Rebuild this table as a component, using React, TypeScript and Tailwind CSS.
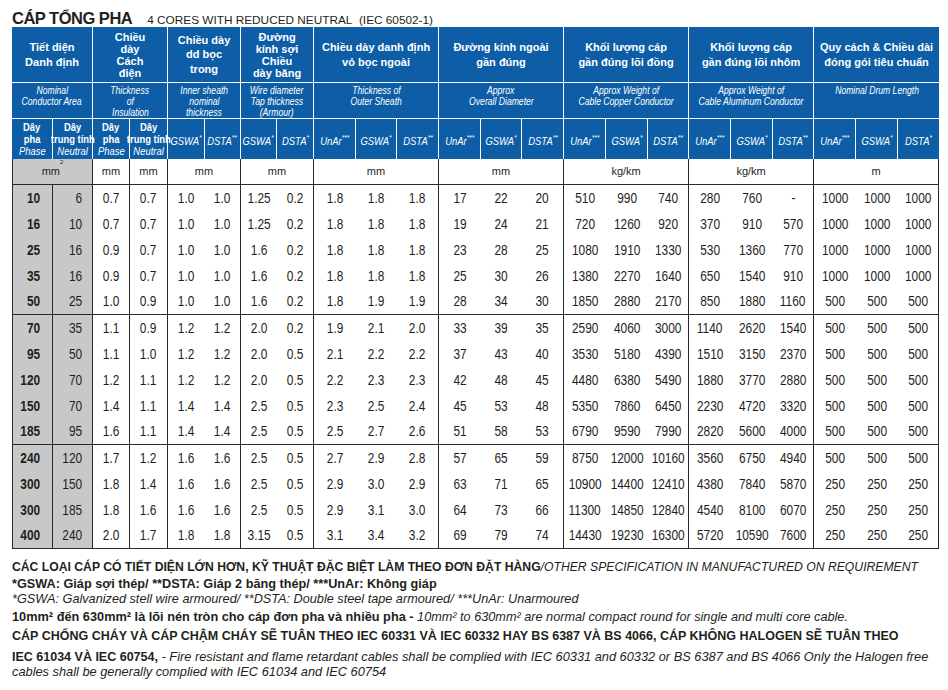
import React from "react";

const colW = [
  "w-[41px]", "w-[40px]", "w-[37px]", "w-[38px]", "w-[37px]", "w-[36px]", "w-[36px]", "w-[37px]",
  "w-[42px]", "w-[41px]", "w-[42px]", "w-[42px]", "w-[41px]", "w-[42px]", "w-[42px]", "w-[42px]",
  "w-[41px]", "w-[42px]", "w-[42px]", "w-[41px]", "w-[42px]", "w-[42px]", "w-[41px]",
];

const groups = [
  { span: 2, vi: ["Tiết diện", "Danh định"], en: ["Nominal", "Conductor Area"], tight: false },
  { span: 2, vi: ["Chiều", "dày", "Cách", "điện"], en: ["Thickness", "of", "Insulation"], tight: true },
  { span: 2, vi: ["Chiều dày", "dd bọc", "trong"], en: ["Inner sheath", "nominal", "thickness"], tight: false },
  { span: 2, vi: ["Đường", "kính sợi", "Chiều", "dày băng"], en: ["Wire diameter", "Tap thickness", "(Armour)"], tight: true },
  { span: 3, vi: ["Chiều dày danh định", "vỏ bọc ngoài"], en: ["Thickness of", "Outer Sheath"], tight: false },
  { span: 3, vi: ["Đường kính ngoài", "gần đúng"], en: ["Approx", "Overall Diameter"], tight: false },
  { span: 3, vi: ["Khối lượng cáp", "gần đúng lõi đồng"], en: ["Approx Weight of", "Cable Copper Conductor"], tight: false },
  { span: 3, vi: ["Khối lượng cáp", "gần đúng lõi nhôm"], en: ["Approx Weight of", "Cable Aluminum Conductor"], tight: false },
  { span: 3, vi: ["Quy cách & Chiều dài", "đóng gói tiêu chuẩn"], en: ["Nominal Drum Length"], tight: false },
];

const subs: [string, string][] = [
  ["GSWA", "*"], ["DSTA", "**"], ["GSWA", "*"], ["DSTA", "*"],
  ["UnAr", "***"], ["GSWA", "*"], ["DSTA", "**"],
  ["UnAr", "***"], ["GSWA", "*"], ["DSTA", "**"],
  ["UnAr", "***"], ["GSWA", "*"], ["DSTA", "**"],
  ["UnAr", "***"], ["GSWA", "*"], ["DSTA", "**"],
  ["UnAr", "***"], ["GSWA", "*"], ["DSTA", "*"],
];

const units: [string, number][] = [
  ["mm", 1], ["mm", 1], ["mm", 2], ["mm", 2], ["mm", 3], ["mm", 3], ["kg/km", 3], ["kg/km", 3], ["m", 3],
];

const data = [
  [
    ["10", "6", "0.7", "0.7", "1.0", "1.0", "1.25", "0.2", "1.8", "1.8", "1.8", "17", "22", "20", "510", "990", "740", "280", "760", "-", "1000", "1000", "1000"],
    ["16", "10", "0.7", "0.7", "1.0", "1.0", "1.25", "0.2", "1.8", "1.8", "1.8", "19", "24", "21", "720", "1260", "920", "370", "910", "570", "1000", "1000", "1000"],
    ["25", "16", "0.9", "0.7", "1.0", "1.0", "1.6", "0.2", "1.8", "1.8", "1.8", "23", "28", "25", "1080", "1910", "1330", "530", "1360", "770", "1000", "1000", "1000"],
    ["35", "16", "0.9", "0.7", "1.0", "1.0", "1.6", "0.2", "1.8", "1.8", "1.8", "25", "30", "26", "1380", "2270", "1640", "650", "1540", "910", "1000", "1000", "1000"],
    ["50", "25", "1.0", "0.9", "1.0", "1.0", "1.6", "0.2", "1.8", "1.9", "1.9", "28", "34", "30", "1850", "2880", "2170", "850", "1880", "1160", "500", "500", "500"],
  ],
  [
    ["70", "35", "1.1", "0.9", "1.2", "1.2", "2.0", "0.2", "1.9", "2.1", "2.0", "33", "39", "35", "2590", "4060", "3000", "1140", "2620", "1540", "500", "500", "500"],
    ["95", "50", "1.1", "1.0", "1.2", "1.2", "2.0", "0.5", "2.1", "2.2", "2.2", "37", "43", "40", "3530", "5180", "4390", "1510", "3150", "2370", "500", "500", "500"],
    ["120", "70", "1.2", "1.1", "1.2", "1.2", "2.0", "0.5", "2.2", "2.3", "2.3", "42", "48", "45", "4480", "6380", "5490", "1880", "3770", "2880", "500", "500", "500"],
    ["150", "70", "1.4", "1.1", "1.4", "1.4", "2.5", "0.5", "2.3", "2.5", "2.4", "45", "53", "48", "5350", "7860", "6450", "2230", "4720", "3320", "500", "500", "500"],
    ["185", "95", "1.6", "1.1", "1.4", "1.4", "2.5", "0.5", "2.5", "2.7", "2.6", "51", "58", "53", "6790", "9590", "7990", "2820", "5600", "4000", "500", "500", "500"],
  ],
  [
    ["240", "120", "1.7", "1.2", "1.6", "1.6", "2.5", "0.5", "2.7", "2.9", "2.8", "57", "65", "59", "8750", "12000", "10160", "3560", "6750", "4940", "500", "500", "500"],
    ["300", "150", "1.8", "1.4", "1.6", "1.6", "2.5", "0.5", "2.9", "3.0", "2.9", "63", "71", "65", "10900", "14400", "12410", "4380", "7840", "5870", "250", "250", "250"],
    ["300", "185", "1.8", "1.6", "1.6", "1.6", "2.5", "0.5", "2.9", "3.1", "3.0", "64", "73", "66", "11300", "14850", "12840", "4540", "8100", "6070", "250", "250", "250"],
    ["400", "240", "2.0", "1.7", "1.8", "1.8", "3.15", "0.5", "3.1", "3.4", "3.2", "69", "79", "74", "14430", "19230", "16300", "5720", "10590", "7600", "250", "250", "250"],
  ],
];

// columns that carry a dark vertical rule on their right side
const ruled = [0, 1, 2, 3, 5, 7, 10, 13, 16, 19, 22];

// Arial Narrow look: regular Liberation Sans squeezed horizontally
function Nar({ children, className = "" }: { children: React.ReactNode; className?: string }) {
  return (
    <div className={`flex justify-center ${className}`}>
      <span className="inline-block whitespace-nowrap scale-x-[0.82]">{children}</span>
    </div>
  );
}

function Head() {
  return (
    <thead className="text-white">
      <tr className="h-[56px]">
        {groups.map((g, i) => (
          <th
            key={i}
            colSpan={g.span}
            className={`bg-[#0d5ea6] border-b border-white align-middle text-[11px] font-bold ${g.tight ? "leading-[12px]" : "leading-[14.5px]"} ${i < groups.length - 1 ? "border-r" : ""}`}
          >
            {g.vi.map((l, j) => (
              <div key={j}>{l}</div>
            ))}
          </th>
        ))}
      </tr>
      <tr className="h-[34px]">
        {groups.map((g, i) => (
          <th
            key={i}
            colSpan={g.span}
            className={`bg-[#0d5ea6] border-b border-white align-top pt-[2px] text-[10.5px] font-normal italic leading-[11px] ${i < groups.length - 1 ? "border-r" : ""}`}
          >
            {g.en.map((l, j) => (
              <Nar key={j}>{l}</Nar>
            ))}
          </th>
        ))}
      </tr>
      <tr className="h-[40px]">
        {[0, 1].map((k) => (
          <React.Fragment key={k}>
            <th className="bg-[#0d5ea6] border-r border-white align-middle text-[11.5px] leading-[12px]">
              <Nar className="font-bold">Dây</Nar>
              <Nar className="font-bold">pha</Nar>
              <Nar className="font-normal italic">Phase</Nar>
            </th>
            <th className="bg-[#0d5ea6] border-r border-white align-middle text-[11.5px] leading-[12px]">
              <Nar className="font-bold">Dây</Nar>
              <Nar className="font-bold">trung tính</Nar>
              <Nar className="font-normal italic">Neutral</Nar>
            </th>
          </React.Fragment>
        ))}
        {subs.map(([b, s], i) => (
          <th
            key={i}
            className={`bg-[#0d5ea6] align-middle pt-[6px] text-[11.5px] font-normal italic ${i < subs.length - 1 ? "border-r border-white" : ""}`}
          >
            <Nar>
              {b}
              <span className="text-[8px] align-top relative top-[-1px]">{s}</span>
            </Nar>
          </th>
        ))}
      </tr>
    </thead>
  );
}

function Body() {
  return (
    <tbody className="text-[#1e1e1e]">
      <tr className="h-[26px] text-[11px]">
        <td colSpan={2} className="bg-[#c8c8c8] border-l border-r border-b border-[#2a2a2a] text-center align-middle">
          mm<sup className="text-[6px] align-top relative top-[-1px]">2</sup>
        </td>
        {units.map(([u, s], i) => (
          <td key={i} colSpan={s} className="border-r border-b border-[#2a2a2a] text-center align-middle">
            {u}
          </td>
        ))}
      </tr>
      {data.map((group, gi) =>
        group.map((row, ri) => {
          const last = ri === group.length - 1;
          return (
            <tr key={`${gi}-${ri}`} className="h-[26px] text-[14.5px]">
              {row.map((v, ci) => (
                <td
                  key={ci}
                  className={[
                    "align-middle border-[#2a2a2a] pt-[1px]",
                    ci === 0 ? "bg-[#c8c8c8] border-l text-right pr-[12px] font-bold" : "",
                    ci === 1 ? "bg-[#c8c8c8] text-right pr-[10px]" : "",
                    ruled.includes(ci) ? "border-r" : "",
                    last ? "border-b" : "",
                  ].join(" ")}
                >
                  {ci < 2 ? (
                    <span className="inline-block origin-right scale-x-[0.82]">{v}</span>
                  ) : (
                    <Nar>{v}</Nar>
                  )}
                </td>
              ))}
            </tr>
          );
        })
      )}
    </tbody>
  );
}

export default function App() {
  return (
    <div className="w-[948px] h-[690px] bg-white text-[#231f20] font-['Liberation_Sans',Arial,sans-serif] overflow-hidden">
      <div className="flex items-baseline pl-[12px] pt-[6px] h-[27px]">
        <span className="text-[16.5px] font-bold tracking-[-0.5px]">CÁP TỔNG PHA</span>
        <span className="ml-[15px] text-[11.8px] font-normal">4 CORES WITH REDUCED NEUTRAL&nbsp; (IEC 60502-1)</span>
      </div>
      <table className="ml-[12px] table-fixed border-separate border-spacing-0 w-[927px]">
        <colgroup>
          {colW.map((w, i) => (
            <col key={i} className={w} />
          ))}
        </colgroup>
        <Head />
        <Body />
      </table>
      <div className="pl-[12px] pt-[10px]">
        <div className="text-[12.2px] leading-[17px]">
          <span className="font-bold">CÁC LOẠI CÁP CÓ TIẾT DIỆN LỚN HƠN, KỸ THUẬT ĐẶC BIỆT LÀM THEO ĐƠN ĐẶT HÀNG</span>
          <span className="italic">/OTHER SPECIFICATION IN MANUFACTURED ON REQUIREMENT</span>
        </div>
        <div className="text-[12.7px] leading-[16px] font-bold">
          *GSWA: Giáp sợi thép/ **DSTA: Giáp 2 băng thép/ ***UnAr: Không giáp
        </div>
        <div className="text-[12.7px] leading-[15px] italic">
          *GSWA: Galvanized stell wire armoured/ **DSTA: Double steel tape armoured/ ***UnAr: Unarmoured
        </div>
        <div className="leading-[17px]">
          <span className="font-bold text-[12.75px]">10mm² đến 630mm² là lõi nén tròn cho cáp đơn pha và nhiều pha - </span>
          <span className="italic text-[12.7px]">10mm² to 630mm² are normal compact round for single and multi core cable.</span>
        </div>
        <div className="text-[12.5px] leading-[20px] font-bold">
          CÁP CHỐNG CHÁY VÀ CÁP CHẬM CHÁY SẼ TUÂN THEO IEC 60331 VÀ IEC 60332 HAY BS 6387 VÀ BS 4066, CÁP KHÔNG HALOGEN SẼ TUÂN THEO
        </div>
        <div className="leading-[15px] pt-[2px] whitespace-nowrap">
          <span className="font-bold text-[12.5px]">IEC 61034 VÀ IEC 60754,</span>
          <span className="italic text-[12.8px]">
            {" "}- Fire resistant and flame retardant cables shall be complied with IEC 60331 and 60332 or BS 6387 and BS 4066 Only the Halogen free
          </span>
        </div>
        <div className="leading-[14px] italic text-[12.8px]">
          cables shall be generally complied with IEC 61034 and IEC 60754
        </div>
      </div>
    </div>
  );
}
